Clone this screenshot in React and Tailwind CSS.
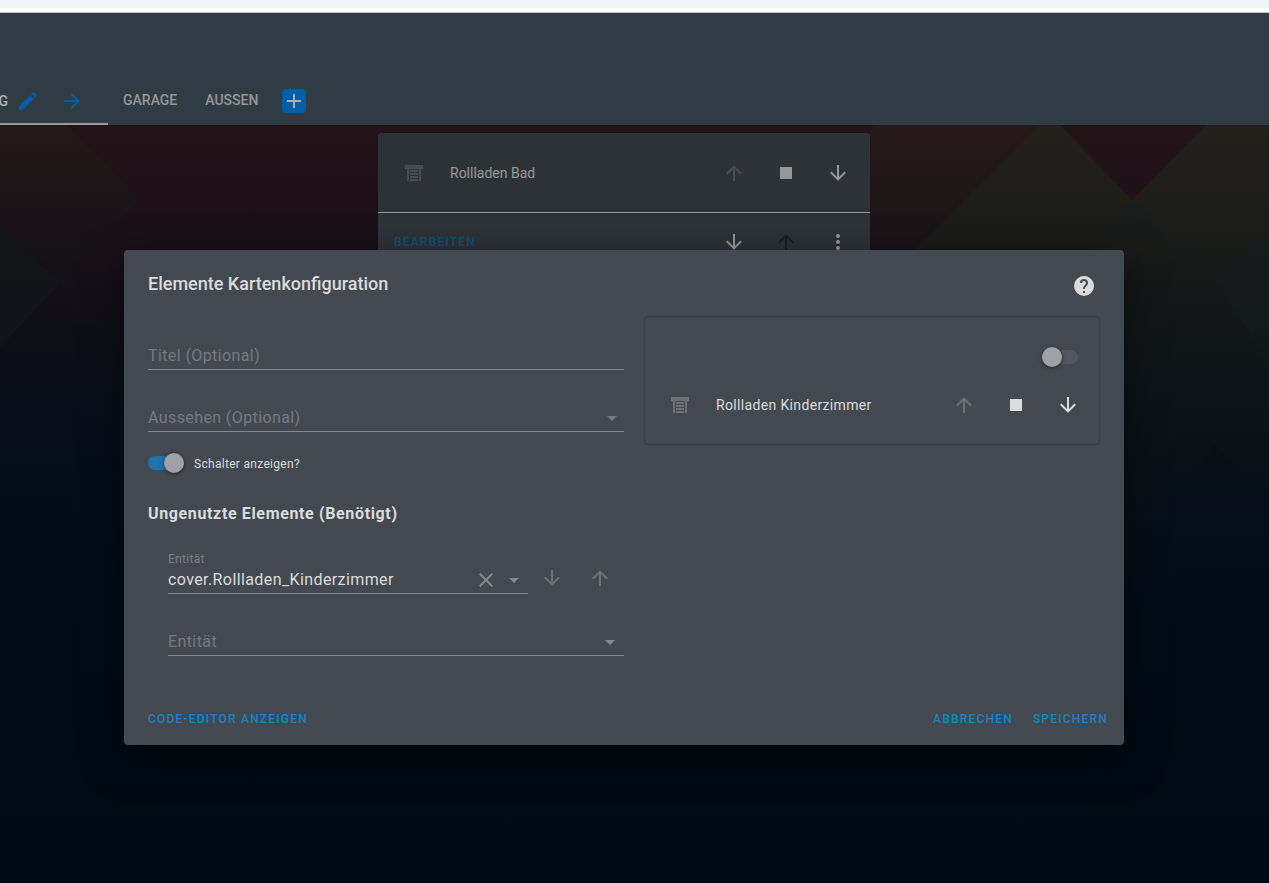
import React, { useState } from "react";

// Material Design icon paths (24x24)
const icons = {
  pencil: "M20.71,7.04C21.1,6.65 21.1,6 20.71,5.63L18.37,3.29C18,2.9 17.35,2.9 16.96,3.29L15.12,5.12L18.87,8.87M3,17.25V21H6.75L17.81,9.93L14.06,6.18L3,17.25Z",
  right: "M4,11V13H16L10.5,18.5L11.92,19.92L19.84,12L11.92,4.08L10.5,5.5L16,11H4Z",
  up: "M13,20H11V8L5.5,13.5L4.08,12.08L12,4.16L19.92,12.08L18.5,13.5L13,8V20Z",
  down: "M11,4H13V16L18.5,10.5L19.92,11.92L12,19.84L4.08,11.92L5.5,10.5L11,16V4Z",
  plus: "M19,13H13V19H11V13H5V11H11V5H13V11H19V13Z",
  stop: "M18,18H6V6H18V18Z",
  dots: "M12,16A2,2 0 0,1 14,18A2,2 0 0,1 12,20A2,2 0 0,1 10,18A2,2 0 0,1 12,16M12,10A2,2 0 0,1 14,12A2,2 0 0,1 12,14A2,2 0 0,1 10,12A2,2 0 0,1 12,10M12,4A2,2 0 0,1 14,6A2,2 0 0,1 12,8A2,2 0 0,1 10,6A2,2 0 0,1 12,4Z",
  help: "M15.07,11.25L14.17,12.17C13.45,12.89 13,13.5 13,15H11V14.5C11,13.39 11.45,12.39 12.17,11.67L13.41,10.41C13.78,10.05 14,9.55 14,9C14,7.89 13.1,7 12,7A2,2 0 0,0 10,9H8A4,4 0 0,1 12,5A4,4 0 0,1 16,9C16,9.88 15.64,10.67 15.07,11.25M13,19H11V17H13M12,2A10,10 0 0,0 2,12A10,10 0 0,0 12,22A10,10 0 0,0 22,12C22,6.47 17.5,2 12,2Z",
  shutter: "M3 4H21V8H19V20H17V8H7V20H5V8H3V4M8 9H16V11H8V9M8 12H16V14H8V12M8 15H16V17H8V15M8 18H16V20H8V18Z",
  caret: "M7,10L12,15L17,10H7Z",
  close: "M19,6.41L17.59,5L12,10.59L6.41,5L5,6.41L10.59,12L5,17.59L6.41,19L12,13.41L17.59,19L19,17.59L13.41,12L19,6.41Z",
};

const Icon = ({ name, className = "" }) => (
  <svg viewBox="0 0 24 24" fill="currentColor" aria-hidden="true" className={`w-6 h-6 shrink-0 ${className}`}>
    <path d={icons[name]} />
  </svg>
);

const IconButton = ({ name, label, className = "" }) => (
  <button type="button" aria-label={label} className={`w-12 h-12 flex items-center justify-center shrink-0 ${className}`}>
    <Icon name={name} />
  </button>
);

// Toggle switch, the real checkbox is visually hidden
const Toggle = ({ id, label, checked, onChange }) => (
  <span className="relative flex items-center w-9 h-5 shrink-0">
    <input id={id} type="checkbox" aria-label={label} checked={checked} onChange={onChange} className="absolute inset-0 w-full h-full opacity-0 cursor-pointer z-10" />
    <span className={`w-full h-[14px] rounded-full ${checked ? "bg-[#2074ad]" : "bg-[#54565f]"}`} />
    <span className={`absolute top-0 w-5 h-5 rounded-full bg-[#a0a0a6] shadow-[0_1px_4px_rgba(0,0,0,0.5)] ${checked ? "right-0" : "left-0"}`} />
  </span>
);

// Wallpaper behind the cards
const Wallpaper = () => (
  <svg className="absolute inset-0 w-full h-full" viewBox="0 0 1269 758" preserveAspectRatio="none" aria-hidden="true">
    <defs>
      <linearGradient id="base" x1="0" y1="0" x2="0" y2="1">
        <stop offset="0" stopColor="#241318" />
        <stop offset="0.16" stopColor="#1a1017" />
        <stop offset="0.28" stopColor="#0e0e17" />
        <stop offset="0.42" stopColor="#050d17" />
        <stop offset="0.62" stopColor="#010c15" />
        <stop offset="1" stopColor="#000a13" />
      </linearGradient>
      <linearGradient id="olive" gradientUnits="userSpaceOnUse" x1="0" y1="0" x2="0" y2="480">
        <stop offset="0" stopColor="#24201c" />
        <stop offset="0.16" stopColor="#1d1d1a" />
        <stop offset="0.3" stopColor="#171918" />
        <stop offset="0.6" stopColor="#0c1318" />
        <stop offset="1" stopColor="#060e16" stopOpacity="0" />
      </linearGradient>
      <linearGradient id="left" x1="0" y1="0" x2="0" y2="1">
        <stop offset="0" stopColor="#231a19" />
        <stop offset="1" stopColor="#131217" />
      </linearGradient>
      <linearGradient id="corner" x1="0" y1="0" x2="0" y2="1">
        <stop offset="0" stopColor="#151519" />
        <stop offset="1" stopColor="#0f1417" />
      </linearGradient>
      <linearGradient id="rust" x1="0" y1="0" x2="0" y2="1">
        <stop offset="0" stopColor="#261919" />
        <stop offset="1" stopColor="#191317" />
      </linearGradient>
    </defs>
    <rect width="1269" height="758" fill="url(#base)" />
    <path d="M0 0H66L140 74L62 155L0 100Z" fill="url(#left)" opacity="0.7" />
    <path d="M0 100L60 158L0 222Z" fill="url(#corner)" />
    <path d="M876 0H1048L920 128H870V6Z" fill="url(#rust)" />
    <path d="M1040 0H1060L1132 75L1206 0H1269V480H700V340Z" fill="url(#olive)" />
    <path d="M1095 112L1132 75L1215 152L1269 105V240L1215 152L1160 112Z" fill="#181e20" opacity="0.3" />
    <path d="M1215 320L1269 375V470H1090Z" fill="#060d17" opacity="0.3" />
  </svg>
);

// Underlined field whose label rests inside until it is filled
const labelStyle = "absolute left-0 top-[1px] leading-[26px] pointer-events-none text-base tracking-wide text-[#777980]";

const SelectField = ({ id, label, caretClass }) => (
  <div className="relative h-7 flex items-center border-b border-[#86888f]">
    <label htmlFor={id} className={labelStyle}>{label}</label>
    <select id={id} defaultValue="" className="flex-1 h-6 appearance-none bg-transparent text-base text-[#dcdcdc] outline-none">
      <option value=""></option>
    </select>
    <Icon name="caret" className={caretClass} />
  </div>
);

const App = () => {
  const [title, setTitle] = useState("");
  const [entity, setEntity] = useState("cover.Rollladen_Kinderzimmer");
  const [showToggle, setShowToggle] = useState(true);
  const [allOn, setAllOn] = useState(false);

  return (
    <div className="relative min-h-screen flex flex-col overflow-hidden bg-[#000a13] font-['Roboto',sans-serif]">
      {/* Browser edge */}
      <div className="h-2 shrink-0 bg-[#f1f3f4]" />
      <div className="h-[5px] shrink-0 bg-white border-b border-[#c3c6c9]" />

      {/* Header */}
      <header className="h-28 shrink-0 flex items-end bg-[#2f3c43] text-sm font-medium text-[#979797]">
        <nav className="flex h-12">
          <div className="w-[108px] flex items-center pt-0.5 border-b-2 border-[#999]">
            <a href="#g" className="w-2 flex justify-end text-[#b0b0b0]">G</a>
            <button type="button" aria-label="Ansicht bearbeiten" className="ml-2 text-[#035ea6]"><Icon name="pencil" /></button>
            <button type="button" aria-label="Nach rechts" className="ml-5 text-[#035ea6]"><Icon name="right" /></button>
          </div>
          <a href="#garage" className="ml-[15px] pb-0.5 flex items-center">GARAGE</a>
          <a href="#aussen" className="ml-7 pb-0.5 flex items-center">AUSSEN</a>
          <button type="button" aria-label="Ansicht hinzufügen" className="ml-6 self-center bg-[#035ea6] text-[#b0b0b0] rounded">
            <Icon name="plus" />
          </button>
        </nav>
      </header>

      <main className="relative flex-1 pr-[21px] pt-2">
        <Wallpaper />
        {/* Card in the background */}
        <section className="relative w-[492px] mx-auto rounded bg-[#2d3236] ring-1 ring-inset ring-[#29353b] text-[#989898]">
          <div className="h-20 flex items-center pl-6 pr-2 border-b border-[#999]">
            <Icon name="shutter" className="text-[#4a4c52]" />
            <span className="flex-1 pl-6 text-sm">Rollladen Bad</span>
            <IconButton name="up" label="Öffnen" className="text-[#4a4c52]" />
            <IconButton name="stop" label="Stopp" className="ml-1" />
            <IconButton name="down" label="Schließen" className="ml-1" />
          </div>
          <div className="h-[58px] flex items-center pl-4 pr-2">
            <button type="button" className="text-xs font-medium tracking-widest text-[#0e4f7c]">BEARBEITEN</button>
            <span className="flex-1" />
            <IconButton name="down" label="Nach unten" />
            <IconButton name="up" label="Nach oben" className="ml-1 text-[#1b1f22]" />
            <IconButton name="dots" label="Mehr" className="ml-1" />
          </div>
        </section>
      </main>

      {/* Dialog */}
      <div className="absolute inset-0 flex justify-center items-start pt-[250px] pr-[21px]">
        <div role="dialog" aria-labelledby="dialog-title" className="w-full max-w-[1000px] rounded bg-[#434950] text-[#dcdcdc] shadow-[0_11px_40px_rgba(0,0,0,0.5)]">
          <div className="flex justify-between pl-6 pr-7 pt-4">
            <h2 id="dialog-title" className="text-lg font-medium leading-9">Elemente Kartenkonfiguration</h2>
            <button type="button" aria-label="Hilfe" className="h-10"><Icon name="help" /></button>
          </div>

          <div className="grid grid-cols-[476fr_456fr] gap-5 px-6 pt-[10px]">
            <form>
              <div className="pt-[26px]">
                <div className="relative h-7 border-b border-[#86888f]">
                  <label htmlFor="title" className={`${labelStyle} ${title ? "hidden" : ""}`}>Titel (Optional)</label>
                  <input
                    id="title"
                    value={title}
                    onChange={(e) => setTitle(e.target.value)}
                    className="block w-full h-[27px] bg-transparent text-base tracking-wide outline-none"
                  />
                </div>
              </div>
              <div className="pt-[34px]">
                <SelectField id="theme" label="Aussehen (Optional)" caretClass="text-[#777980]" />
              </div>
              <div className="flex items-center pt-[21px]">
                <Toggle id="show-toggle" checked={showToggle} onChange={() => setShowToggle(!showToggle)} />
                <label htmlFor="show-toggle" className="pl-[10px] pt-0.5 text-xs tracking-wide">Schalter anzeigen?</label>
              </div>

              <h3 className="pt-[29px] text-base font-bold tracking-[0.04em]">Ungenutzte Elemente (Benötigt)</h3>
              <div className="pl-5 pt-6">
                <div className="flex items-start">
                  <div className="flex-1">
                    <label htmlFor="entity" className="block h-4 text-xs leading-[18px] tracking-wide text-[#7d7f87]">Entität</label>
                    <div className="h-7 flex items-center pr-0.5 border-b border-[#86888f] text-[#86888f]">
                      <input
                        id="entity"
                        value={entity}
                        onChange={(e) => setEntity(e.target.value)}
                        className="flex-1 min-w-0 h-[26px] bg-transparent text-base tracking-wide text-[#dcdcdc] outline-none"
                      />
                      <button type="button" aria-label="Löschen"><Icon name="close" /></button>
                      <button type="button" aria-label="Auswahl öffnen" className="ml-1"><Icon name="caret" /></button>
                    </div>
                  </div>
                  <div className="flex pt-1 text-[#6f7078]">
                    <IconButton name="down" label="Nach unten" />
                    <IconButton name="up" label="Nach oben" />
                  </div>
                </div>
                <div className="pt-[26px]">
                  <SelectField id="new-entity" label="Entität" caretClass="mr-0.5 text-[#86888f]" />
                </div>
              </div>
            </form>

            {/* Preview */}
            <section className="self-start h-[129px] rounded ring-1 ring-inset ring-[#383c43] pl-6 pr-2">
              <div className="flex justify-end pt-[31px] pr-[14px]">
                <Toggle id="all" label="Alle schalten" checked={allOn} onChange={() => setAllOn(!allOn)} />
              </div>
              <div className="flex items-center pt-[14px]">
                <Icon name="shutter" className="text-[#6f7078]" />
                <span className="flex-1 pl-6 text-sm tracking-wide">Rollladen Kinderzimmer</span>
                <IconButton name="up" label="Öffnen" className="text-[#6f7078]" />
                <IconButton name="stop" label="Stopp" className="ml-1" />
                <IconButton name="down" label="Schließen" className="ml-1" />
              </div>
            </section>
          </div>

          <div className="flex items-center gap-5 pl-6 pr-4 pt-[55px] pb-[18px] text-xs font-medium text-[#1a82c4]">
            <button type="button" className="tracking-widest">CODE-EDITOR ANZEIGEN</button>
            <span className="flex-1" />
            <button type="button" className="tracking-widest">ABBRECHEN</button>
            <button type="button" className="tracking-widest">SPEICHERN</button>
          </div>
        </div>
      </div>
    </div>
  );
};

export default App;
